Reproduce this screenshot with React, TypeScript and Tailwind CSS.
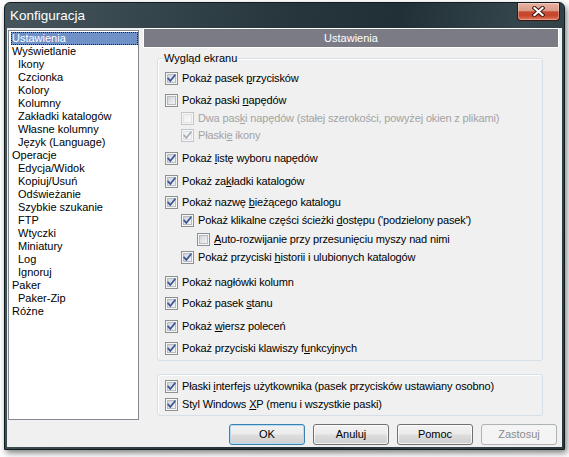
import React from "react";

type Row = {
  label: React.ReactNode;
  checked: boolean;
  disabled?: boolean;
  indent: string;
  mt: string;
};

function Check({ checked, disabled }: { checked: boolean; disabled?: boolean }) {
  const border = disabled ? "#c3c5c8" : "#8e8f8f";
  const inner = disabled ? "#e0e2e5" : "#b7bcc4";
  const mark = disabled ? "#a9afba" : "#3d5796";
  const gid = disabled ? "cbgd" : "cbgn";
  return (
    <svg width="13" height="13" viewBox="0 0 13 13" className="shrink-0 block">
      <defs>
        <linearGradient id={gid} x1="0" y1="0" x2="1" y2="1">
          <stop offset="0" stopColor={disabled ? "#eceef0" : "#cdd1d7"} />
          <stop offset="1" stopColor={disabled ? "#fafafa" : "#f7f7f7"} />
        </linearGradient>
      </defs>
      <rect x="0.5" y="0.5" width="12" height="12" fill="#f6f6f6" stroke={border} />
      <rect x="2.5" y="2.5" width="8" height="8" fill={`url(#${gid})`} stroke={inner} />
      {checked && (
        <path
          d="M3.1 6.4 L5.3 9 L9.9 3.2"
          fill="none"
          stroke={mark}
          strokeWidth="1.8"
          strokeLinecap="round"
          strokeLinejoin="round"
        />
      )}
    </svg>
  );
}

function CheckRow({ row }: { row: Row }) {
  return (
    <div className={`flex items-center h-[16px] ${row.mt} ${row.indent}`}>
      <Check checked={row.checked} disabled={row.disabled} />
      <span
        className={`ml-[4px] whitespace-nowrap leading-[13px] tracking-[-0.15px] ${
          row.disabled ? "text-[#a3a3a3]" : "text-black"
        }`}
      >
        {row.label}
      </span>
    </div>
  );
}

const mainRows: Row[] = [
  { label: <>Pokaż pasek <u>p</u>rzycisków</>, checked: true, indent: "pl-[7px]", mt: "mt-[11px]" },
  { label: <>Pokaż paski <u>n</u>apędów</>, checked: false, indent: "pl-[7px]", mt: "mt-[6px]" },
  {
    label: <>Dwa pas<u>k</u>i napędów (stałej szerokości, powyżej okien z plikami)</>,
    checked: false,
    disabled: true,
    indent: "pl-[23px]",
    mt: "mt-[2px]",
  },
  { label: <>Płaski<u>e</u> ikony</>, checked: true, disabled: true, indent: "pl-[23px]", mt: "mt-[1px]" },
  { label: <>Pokaż <u>l</u>istę wyboru napędów</>, checked: true, indent: "pl-[7px]", mt: "mt-[7px]" },
  { label: <>Pokaż za<u>k</u>ładki katalogów</>, checked: true, indent: "pl-[7px]", mt: "mt-[7px]" },
  { label: <>Pokaż nazwę <u>b</u>ieżącego katalogu</>, checked: true, indent: "pl-[7px]", mt: "mt-[5px]" },
  {
    label: <>Pokaż klikalne części ścieżki <u>d</u>ostępu ('podzielony pasek')</>,
    checked: true,
    indent: "pl-[23px]",
    mt: "mt-[2px]",
  },
  {
    label: <><u>A</u>uto-rozwijanie przy przesunięciu myszy nad nimi</>,
    checked: false,
    indent: "pl-[39px]",
    mt: "mt-[3px]",
  },
  {
    label: <>Pokaż przyciski <u>h</u>istorii i ulubionych katalogów</>,
    checked: true,
    indent: "pl-[23px]",
    mt: "mt-[2px]",
  },
  { label: <>Pokaż na<u>g</u>łówki kolumn</>, checked: true, indent: "pl-[7px]", mt: "mt-[9px]" },
  { label: <>Pokaż pasek <u>s</u>tanu</>, checked: true, indent: "pl-[7px]", mt: "mt-[5px]" },
  { label: <>Pokaż <u>w</u>iersz poleceń</>, checked: true, indent: "pl-[7px]", mt: "mt-[7px]" },
  { label: <>Pokaż przyciski klawiszy f<u>u</u>nkcyjnych</>, checked: true, indent: "pl-[7px]", mt: "mt-[6px]" },
];

const lowerRows: Row[] = [
  {
    label: <>Płaski <u>i</u>nterfejs użytkownika (pasek przycisków ustawiany osobno)</>,
    checked: true,
    indent: "pl-[7px]",
    mt: "mt-[3px]",
  },
  { label: <>Styl Windows <u>X</u>P (menu i wszystkie paski)</>, checked: true, indent: "pl-[7px]", mt: "mt-[2px]" },
];

const tree: { label: string; sub?: boolean }[] = [
  { label: "Ustawienia" },
  { label: "Wyświetlanie" },
  { label: "Ikony", sub: true },
  { label: "Czcionka", sub: true },
  { label: "Kolory", sub: true },
  { label: "Kolumny", sub: true },
  { label: "Zakładki katalogów", sub: true },
  { label: "Własne kolumny", sub: true },
  { label: "Język (Language)", sub: true },
  { label: "Operacje" },
  { label: "Edycja/Widok", sub: true },
  { label: "Kopiuj/Usuń", sub: true },
  { label: "Odświeżanie", sub: true },
  { label: "Szybkie szukanie", sub: true },
  { label: "FTP", sub: true },
  { label: "Wtyczki", sub: true },
  { label: "Miniatury", sub: true },
  { label: "Log", sub: true },
  { label: "Ignoruj", sub: true },
  { label: "Paker" },
  { label: "Paker-Zip", sub: true },
  { label: "Różne" },
];

function Button({ label, def, disabled }: { label: string; def?: boolean; disabled?: boolean }) {
  if (disabled) {
    return (
      <div className="w-[76px] h-[21px] rounded-[3px] border border-[#adb2b5] bg-[#f4f4f4] flex items-center justify-center text-[#8a8a8a]">
        {label}
      </div>
    );
  }
  return (
    <div
      className={`w-[76px] h-[21px] rounded-[3px] border flex items-center justify-center text-black bg-[linear-gradient(180deg,#f2f2f2_0%,#ebebeb_48%,#dddddd_52%,#cfcfcf_100%)] ${
        def
          ? "border-[#3c7fb1] shadow-[inset_0_0_0_1px_#b4dcf4]"
          : "border-[#707070] shadow-[inset_0_0_0_1px_rgba(255,255,255,0.75)]"
      }`}
    >
      {label}
    </div>
  );
}

export default function App() {
  return (
    <div className="w-[569px] h-[457px] bg-white overflow-hidden pt-[2px] pl-[4px] font-['Liberation_Sans',Arial,sans-serif] text-[11px]">
      <div className="w-[561px] h-[448px] flex flex-col rounded-t-[6px] border border-[#121c21] bg-[linear-gradient(100deg,#46565c_0%,#36464d_22%,#27363d_45%,#213037_62%,#36464d_82%,#2a3940_100%)] shadow-[2px_3px_6px_rgba(0,0,0,0.5)]">
        {/* title bar */}
        <div className="h-[25px] flex items-start shrink-0">
          <div className="self-center pl-[5px] text-white text-[13.5px] leading-none">Konfiguracja</div>
          <div className="ml-auto mr-[4px] w-[43px] h-[18px] rounded-b-[4px] border border-t-0 border-[#3b150e] bg-[linear-gradient(180deg,#eab2a3_0%,#d99a88_45%,#c54a31_52%,#c8452b_75%,#e07d61_100%)] shadow-[inset_0_0_0_1px_rgba(255,255,255,0.3)] flex items-center justify-center">
            <svg width="13" height="11" viewBox="0 0 13 11">
              <path d="M2.5 2 L10.5 9 M10.5 2 L2.5 9" stroke="#3a160f" strokeWidth="4.2" strokeLinecap="square" />
              <path d="M2.5 2 L10.5 9 M10.5 2 L2.5 9" stroke="#ffffff" strokeWidth="2.2" strokeLinecap="square" />
            </svg>
          </div>
        </div>
        {/* client */}
        <div className="mx-[2px] mb-[2px] h-[419px] bg-[#f0f0f0] flex flex-col">
          <div className="flex h-[392px]">
            {/* list */}
            <div className="ml-[1px] mt-[2px] w-[131px] h-[390px] border border-[#828790] bg-white pl-[2px] pt-[1px]">
              {tree.map((t, i) => (
                <div
                  key={i}
                  className={`h-[13px] leading-[13px] whitespace-nowrap w-[127px] ${t.sub ? "pl-[7px]" : "pl-[1px]"} ${
                    i === 0
                      ? "bg-[#6f91c8] text-white outline-1 outline-dotted outline-[#202020] -outline-offset-1"
                      : "text-black"
                  }`}
                >
                  {t.label}
                </div>
              ))}
            </div>
            {/* right panel */}
            <div className="ml-[4px] w-[416px] flex flex-col">
              <div className="h-[20px] border border-white bg-[#7b7b86] text-white flex items-center justify-center">
                Ustawienia
              </div>
              <div className="relative mt-[10px] ml-[14px] w-[386px] h-[303px] rounded-[3px] border border-[#d5dfe5] shadow-[inset_1px_1px_0_#ffffff]">
                <span className="absolute left-[5px] top-[-7px] px-[1px] leading-[13px] bg-[#f0f0f0] text-black">
                  Wygląd ekranu
                </span>
                {mainRows.map((r, i) => (
                  <CheckRow key={i} row={r} />
                ))}
              </div>
              <div className="mt-[13px] ml-[14px] w-[386px] h-[42px] rounded-[3px] border border-[#d5dfe5] shadow-[inset_1px_1px_0_#ffffff]">
                {lowerRows.map((r, i) => (
                  <CheckRow key={i} row={r} />
                ))}
              </div>
            </div>
          </div>
          <div className="mt-[4px] flex justify-end gap-[8px] pr-[5px]">
            <Button label="OK" def />
            <Button label="Anuluj" />
            <Button label="Pomoc" />
            <Button label="Zastosuj" disabled />
          </div>
        </div>
      </div>
    </div>
  );
}
